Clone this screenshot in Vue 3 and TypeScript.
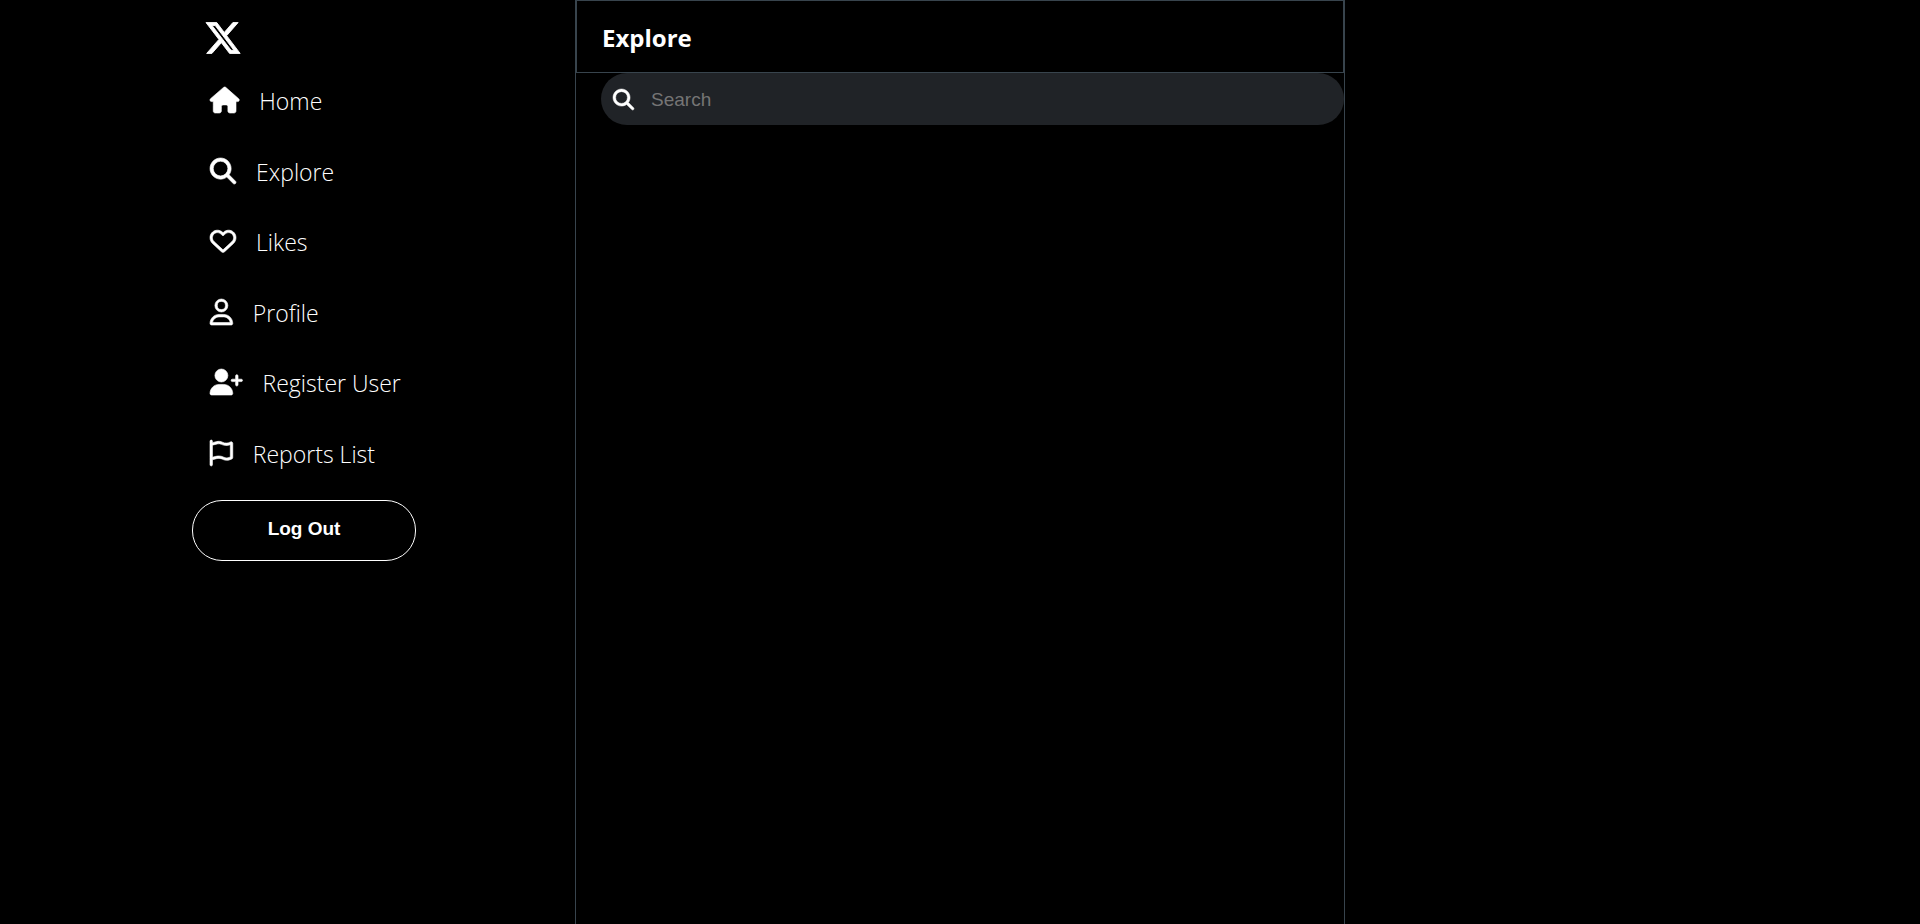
<script setup lang="ts">
import { ref } from 'vue'

interface Icon {
  width: number
  path: string
}

interface NavItem {
  label: string
  href: string
  icon: Icon
}

const searchIcon: Icon = {
  width: 512,
  path: 'M416 208c0 45.900-14.900 88.300-40 122.700L502.600 457.400c12.500 12.500 12.500 32.800 0 45.300s-32.800 12.500-45.300 0L330.700 376c-34.400 25.200-76.800 40-122.700 40C93.100 416 0 322.900 0 208S93.100 0 208 0S416 93.100 416 208zM208 352a144 144 0 1 0 0-288 144 144 0 1 0 0 288z',
}

const navItems: NavItem[] = [
  {
    label: 'Home',
    href: '#home',
    icon: {
      width: 576,
      path: 'M575.800 255.500c0 18-15 32.100-32 32.100h-32l.7 160.200c0 2.700-.2 5.400-.5 8.100V472c0 22.100-17.900 40-40 40H456c-1.100 0-2.200 0-3.300-.1c-1.400 .1-2.800 .1-4.200 .1H416 392c-22.100 0-40-17.900-40-40V448 384c0-17.700-14.300-32-32-32H256c-17.700 0-32 14.300-32 32v64 24c0 22.100-17.900 40-40 40H160 128.100c-1.500 0-3-.1-4.500-.2c-1.200 .1-2.400 .2-3.600 .2H104c-22.100 0-40-17.900-40-40V360c0-.9 0-1.900 .1-2.800V287.600H32c-18 0-32-14-32-32.100c0-9 3-17 10-24L266.400 8c7-7 15-8 22-8s15 2 21 7L564.800 231.500c8 7 12 15 11 24z',
    },
  },
  { label: 'Explore', href: '#explore', icon: searchIcon },
  {
    label: 'Likes',
    href: '#likes',
    icon: {
      width: 512,
      path: 'M225.800 468.200l-2.500-2.300L48.100 303.200C17.400 274.700 0 234.700 0 192.800v-3.300c0-70.400 50-130.800 119.200-144C158.600 37.900 198.900 47 231 69.600c9 6.400 17.400 13.800 25 22.300c4.200-4.800 8.700-9.200 13.500-13.300c3.700-3.200 7.500-6.200 11.500-9c32.100-22.600 72.400-31.700 111.800-24.200C462 58.600 512 119.100 512 189.500v3.300c0 41.900-17.400 81.900-48.100 110.400L288.700 465.900l-2.500 2.300c-8.200 7.600-19 11.900-30.200 11.900s-22-4.200-30.200-11.900zM239.100 145c-.4-.3-.7-.7-1-1.100l-17.800-20c-23.100-25.900-58-37.700-92-31.200C81.600 101.500 48 142.100 48 189.500v3.300c0 28.500 11.900 55.800 32.800 75.200L256 430.700 431.200 268c20.900-19.400 32.800-46.700 32.800-75.200v-3.300c0-47.300-33.600-88-80.100-96.900c-34-6.500-69 5.400-92 31.200l-17.800 20c-.3 .4-.7 .7-1 1.100c-4.500 4.500-10.600 7-16.900 7s-12.400-2.500-16.900-7z',
    },
  },
  {
    label: 'Profile',
    href: '#profile',
    icon: {
      width: 448,
      path: 'M304 128a80 80 0 1 0-160 0 80 80 0 1 0 160 0zM96 128a128 128 0 1 1 256 0A128 128 0 1 1 96 128zM49.300 464H398.700c-8.900-63.300-63.300-112-129-112H178.300c-65.700 0-120.100 48.700-129 112zM0 482.300C0 383.800 79.800 304 178.300 304h91.400C368.200 304 448 383.800 448 482.300c0 16.400-13.300 29.700-29.700 29.700H29.700C13.300 512 0 498.700 0 482.300z',
    },
  },
  {
    label: 'Register User',
    href: '#register',
    icon: {
      width: 640,
      path: 'M96 128a128 128 0 1 1 256 0A128 128 0 1 1 96 128zM0 482.300C0 383.800 79.800 304 178.300 304h91.400C368.200 304 448 383.800 448 482.300c0 16.400-13.300 29.700-29.700 29.700H29.700C13.300 512 0 498.700 0 482.300zM504 312V248H440c-13.300 0-24-10.700-24-24s10.700-24 24-24h64V136c0-13.300 10.700-24 24-24s24 10.700 24 24v64h64c13.300 0 24 10.700 24 24s-10.700 24-24 24H552v64c0 13.300-10.700 24-24 24s-24-10.700-24-24z',
    },
  },
  {
    label: 'Reports List',
    href: '#reports',
    icon: {
      width: 448,
      path: 'M48 24C48 10.700 37.300 0 24 0S0 10.700 0 24V64 350.500 400v88c0 13.300 10.700 24 24 24s24-10.700 24-24V388l80.300-20.100c41.100-10.300 84.600-5.500 122.500 13.400c44.200 22.100 95.500 24.800 141.700 7.400l34.700-13c12.500-4.700 20.800-16.600 20.800-30V66.100c0-23-24.200-38-44.800-27.700l-9.600 4.800c-46.300 23.200-100.800 23.200-147.100 0c-35.100-17.600-75.400-22-113.500-12.500L48 52V24zm0 77.500l96.600-24.200c27-6.700 55.500-3.600 80.400 8.800c54.900 27.400 118.700 29.700 175 6.800V334.700l-24.400 9.100c-33.700 12.600-71.200 10.700-103.400-5.400c-48.200-24.100-103.300-30.100-155.600-17.100L48 338.500v-237z',
    },
  },
]

const query = ref('')
</script>

<template>
  <div class="app">
    <aside class="sidebar">
      <a class="logo" href="#home" aria-label="X">
        <svg viewBox="0 0 512 512" aria-hidden="true">
          <path
            d="M389.200 48h70.600L305.600 224.200 487 464H345L233.700 318.600 106.500 464H35.800L200.700 275.500 26.800 48H172.400L272.900 180.900 389.200 48zM364.400 421.800h39.100L151.100 88h-42L364.400 421.800z"
          />
        </svg>
      </a>
      <nav>
        <ul class="nav-list">
          <li v-for="item in navItems" :key="item.label">
            <a class="nav-link" :href="item.href">
              <svg class="icon" :viewBox="`0 0 ${item.icon.width} 512`" aria-hidden="true">
                <path :d="item.icon.path" />
              </svg>
              <span class="nav-label">{{ item.label }}</span>
            </a>
          </li>
        </ul>
      </nav>
      <button class="logout" type="button">Log Out</button>
    </aside>

    <main class="feed">
      <header class="feed-header">
        <h1>Explore</h1>
      </header>
      <form class="search" role="search" @submit.prevent>
        <label for="search-input" aria-label="Search">
          <svg class="search-icon" viewBox="0 0 512 512" aria-hidden="true">
            <path :d="searchIcon.path" />
          </svg>
        </label>
        <input id="search-input" v-model="query" type="text" placeholder="Search" />
      </form>
    </main>
  </div>
</template>

<style>
body {
  margin: 0;
  background: #000;
}
</style>

<style scoped>
.app {
  display: grid;
  grid-template-columns: 1fr calc(40% + 2px) 1fr;
  min-height: 100vh;
  box-sizing: border-box;
  background: #000;
  color: #fff;
  font-family: 'Segoe UI', 'Open Sans', sans-serif;
}

svg {
  display: block;
  overflow: visible;
  fill: currentColor;
  stroke: currentColor;
  stroke-width: 12;
}

.sidebar {
  width: 224px;
  margin-left: 33.4%;
  padding-top: 19px;
}

.logo {
  display: block;
  width: 38px;
  margin-left: 12px;
  color: #fff;
}

.logo svg {
  width: 38px;
  height: 38px;
}

.nav-list {
  display: grid;
  grid-auto-rows: 1fr;
  min-height: 423px;
  margin: 8px 0 12px;
  padding: 0;
  list-style: none;
}

.nav-link {
  display: flex;
  align-items: center;
  gap: 20px;
  height: 100%;
  padding-left: 18px;
  color: #fff;
  text-decoration: none;
}

.icon {
  height: 26px;
  flex: none;
}

.nav-label {
  padding-top: 2px;
  font-size: 23px;
  font-weight: 300;
  line-height: 32px;
  white-space: nowrap;
}

.logout {
  display: block;
  width: 100%;
  height: 61px;
  padding: 0 0 3px;
  border: 1px solid #fff;
  border-radius: 30px;
  background: transparent;
  color: #fff;
  font: bold 19px 'Liberation Sans', Arial, sans-serif;
  cursor: pointer;
}

.feed {
  border: solid #38444d;
  border-width: 0 1px;
}

.feed-header {
  padding: 20px 25px 18px;
  border: 1px solid #38444d;
}

.feed-header h1 {
  margin: 0;
  font-size: 24px;
  font-weight: 700;
  line-height: 33px;
}

.search {
  display: flex;
  align-items: center;
  gap: 15px;
  height: 52px;
  margin-left: 25px;
  padding: 0 12px;
  border-radius: 26px;
  background: #202327;
}

.search-icon {
  width: 21px;
  height: 21px;
}

.search input {
  flex: 1;
  min-width: 0;
  padding: 4px 2px 2px;
  border: 0;
  outline: none;
  background: transparent;
  color: #fff;
  font: 19px 'Liberation Sans', Arial, sans-serif;
}

.search input::placeholder {
  color: #757575;
}
</style>
